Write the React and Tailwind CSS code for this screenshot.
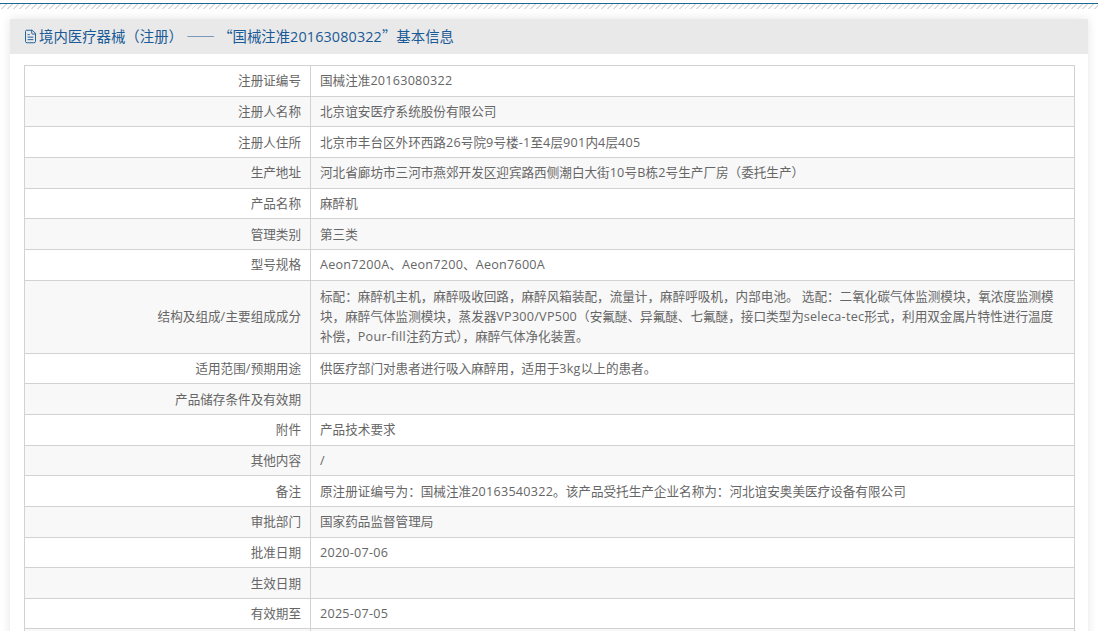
import { FileText } from 'lucide-react';

const rows = [
  ['注册证编号', '国械注准20163080322'],
  ['注册人名称', '北京谊安医疗系统股份有限公司'],
  ['注册人住所', '北京市丰台区外环西路26号院9号楼-1至4层901内4层405'],
  ['生产地址', '河北省廊坊市三河市燕郊开发区迎宾路西侧潮白大街10号B栋2号生产厂房（委托生产）'],
  ['产品名称', '麻醉机'],
  ['管理类别', '第三类'],
  ['型号规格', 'Aeon7200A、Aeon7200、Aeon7600A'],
  ['结构及组成/主要组成成分', '标配：麻醉机主机，麻醉吸收回路，麻醉风箱装配，流量计，麻醉呼吸机，内部电池。 选配：二氧化碳气体监测模块，氧浓度监测模块，麻醉气体监测模块，蒸发器VP300/VP500（安氟醚、异氟醚、七氟醚，接口类型为seleca-tec形式，利用双金属片特性进行温度补偿，Pour-fill注药方式），麻醉气体净化装置。'],
  ['适用范围/预期用途', '供医疗部门对患者进行吸入麻醉用，适用于3kg以上的患者。'],
  ['产品储存条件及有效期', ''],
  ['附件', '产品技术要求'],
  ['其他内容', '/'],
  ['备注', '原注册证编号为：国械注准20163540322。该产品受托生产企业名称为：河北谊安奥美医疗设备有限公司'],
  ['审批部门', '国家药品监督管理局'],
  ['批准日期', '2020-07-06'],
  ['生效日期', ''],
  ['有效期至', '2025-07-05'],
  ['', ''],
];

// latin runs sit a little wider than the font gives them
function Spaced({ text }) {
  return text.split(/([A-Za-z0-9/-]+)/).map((part, i) =>
    i % 2 === 1 ? <span key={i} className="tracking-[0.25px]">{part}</span> : part
  );
}

export default function App() {
  return (
    <div lang="zh-CN" className="h-[631px] overflow-hidden bg-white font-['Open_Sans','Noto_Sans_CJK_SC',sans-serif] text-[12.6px] text-[#666]">
      {/* Top rule */}
      <div className="mt-[3px] h-px bg-[#1c6a94]" />
      <div className="h-[5px] bg-[repeating-linear-gradient(135deg,#dcdcdc_0px,#dcdcdc_1.4px,#ffffff_1.4px,#ffffff_4.2px)]" />

      <div className="mx-[10px] mt-[10px] bg-white shadow-[0_0_10px_rgba(0,0,0,0.1)]">
        <div className="flex h-[35px] items-center gap-[1.5px] bg-[#e9e9e9] pl-[12.5px] text-[14.4px] text-[#1a5a96]">
          <FileText className="h-[15px] w-[15px]" strokeWidth={1.5} />
          <span>
            <span className="font-['Noto_Sans_CJK_SC',sans-serif]">境内医疗器械（注册） —— “</span>
            国械注准<span className="tracking-[0.12px]">20163080322</span>
            <span className="font-['Noto_Sans_CJK_SC',sans-serif]">”基本信息</span>
          </span>
        </div>

        <div className="px-[14px] pt-[11px]">
          <table className="w-[1051px] table-fixed border-collapse">
            <colgroup>
              <col className="w-[286px]" />
              <col />
            </colgroup>
            <tbody>
              {rows.map(([label, value], i) => (
                <tr key={i} className={i % 2 === 1 ? 'bg-[#f8f8f8]' : 'bg-white'}>
                  <td className="h-[30.67px] border border-[#d2d2d2] pt-[2px] pb-0 pr-[9px] text-right leading-[18.67px]"><Spaced text={label} /></td>
                  <td className={`h-[30.67px] border border-[#d2d2d2] px-[9px] ${value.length > 100 ? 'pt-[6px] pb-[5px] leading-[20.33px]' : 'pt-[2px] pb-0 leading-[18.67px]'}`}><Spaced text={value} /></td>
                </tr>
              ))}
            </tbody>
          </table>
        </div>
      </div>
    </div>
  );
}
